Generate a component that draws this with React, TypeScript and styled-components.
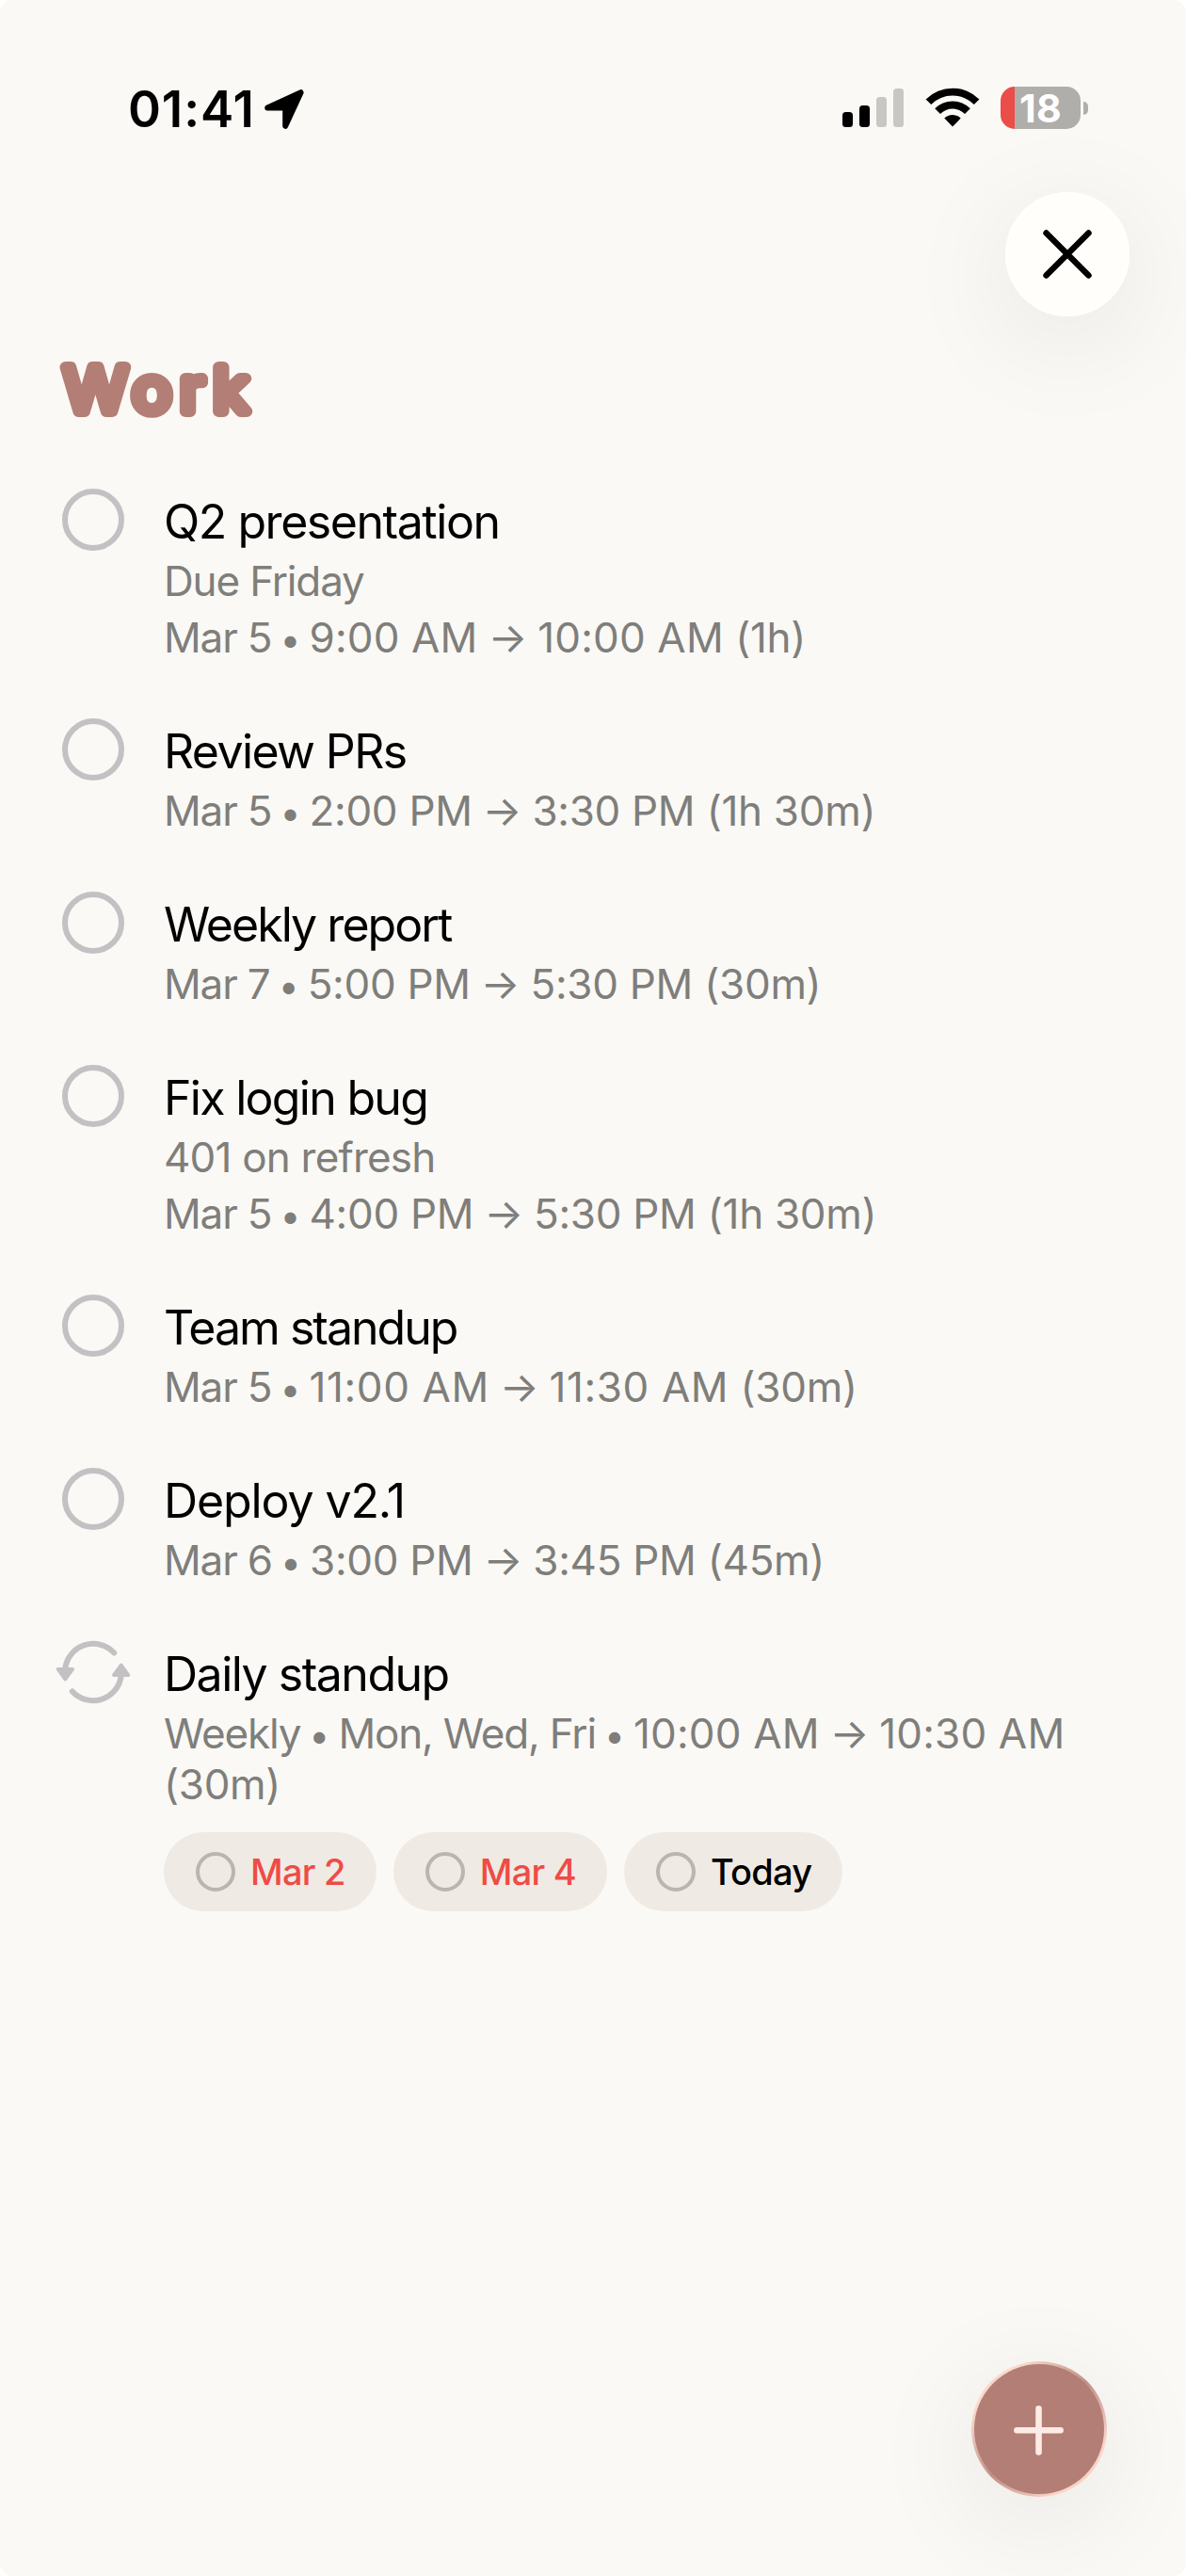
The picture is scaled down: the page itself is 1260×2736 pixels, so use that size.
import React from "react";
import styled, { createGlobalStyle, css } from "styled-components";

const GlobalStyle = createGlobalStyle`
  body {
    margin: 0;
    background: #fff;
  }
  *, *::before, *::after { box-sizing: border-box; }
`;

const Screen = styled.main`
  width: 1260px;
  height: 2736px;
  display: flex;
  flex-direction: column;
  overflow: hidden;
  border-radius: 14px;
  background: #faf9f5;
  color: #000;
  font-family: Inter, "Liberation Sans", sans-serif;
`;

const StatusBar = styled.header`
  height: 204px;
  padding: 92px 104px 0 136px;
  display: flex;
  align-items: flex-start;
  justify-content: space-between;
`;

const StatusGroup = styled.div<{ $gap: number }>`
  display: flex;
  align-items: flex-start;
  height: 45px;
  gap: ${(p) => p.$gap}px;
`;

const Clock = styled.time`
  font-size: 53px;
  line-height: 48px;
  font-weight: 600;
  letter-spacing: 0.9px;
`;

const Arrow = styled.svg`
  margin-top: 3px;
`;

const Signal = styled.div`
  width: 65px;
  height: 43px;
  display: flex;
  align-items: flex-end;
  gap: 7px;
`;

const SignalBar = styled.span<{ $height: number; $active: boolean }>`
  width: 11px;
  height: ${(p) => p.$height}px;
  border-radius: 3.5px;
  background: ${(p) => (p.$active ? "#000" : "#c8c7c4")};
`;

const Battery = styled.div`
  display: flex;
  align-items: center;
  gap: 3px;
`;

const BatteryBody = styled.div`
  width: 85px;
  height: 45px;
  border-radius: 15px;
  display: flex;
  justify-content: center;
  background: linear-gradient(to right, #eb4d49 15px, #afaeab 15px);
  color: #fff;
  font-size: 41px;
  line-height: 46px;
  font-weight: 700;
  letter-spacing: 0.3px;
`;

const BatteryTip = styled.span`
  width: 5px;
  height: 14px;
  border-radius: 0 7px 7px 0;
  background: #afaeab;
`;

const TopActions = styled.div`
  display: flex;
  justify-content: flex-end;
  padding-right: 60px;
`;

const roundButton = css`
  display: flex;
  align-items: center;
  justify-content: center;
  padding: 0;
  border-radius: 50%;
`;

const CloseButton = styled.button`
  ${roundButton}
  width: 132px;
  height: 132px;
  border: 3px solid #fff;
  background: #fffefa;
  box-shadow: 0 24px 120px rgba(0, 0, 0, 0.085);
`;

const Title = styled.h1`
  margin: 0;
  height: 183px;
  padding: 34px 0 0 60px;
`;

const TitleLettering = styled.svg`
  display: block;
  fill: #b37e75;
  stroke: #b37e75;
  stroke-width: 12px;
  stroke-linejoin: round;
  stroke-linecap: round;
  font-size: 64.5px;
  font-weight: 300;
`;

const TaskList = styled.ul`
  margin: 0;
  padding: 0 66px;
  list-style: none;
  display: flex;
  flex-direction: column;
  gap: 59px;
`;

const TaskRow = styled.li`
  display: flex;
  align-items: flex-start;
  gap: 42px;
`;

const Check = styled.span<{ $size: number; $stroke: number; $color: string }>`
  flex: none;
  width: ${(p) => p.$size}px;
  height: ${(p) => p.$size}px;
  border: ${(p) => p.$stroke}px solid ${(p) => p.$color};
  border-radius: 50%;
`;

const RepeatIcon = styled.svg`
  flex: none;
  overflow: visible;
`;

const TaskBody = styled.div`
  padding-top: 5px;
  display: flex;
  flex-direction: column;
  gap: 6px;
`;

const TaskName = styled.div<{ $tracking: number }>`
  margin-bottom: -1px;
  font-size: 50px;
  line-height: 61px;
  letter-spacing: ${(p) => p.$tracking}px;
`;

const TaskDetail = styled.div`
  font-size: 44px;
  line-height: 54px;
  color: #7f7e7b;
`;

const Word = styled.span<{ $tracking: number }>`
  letter-spacing: ${(p) => p.$tracking}px;
  white-space: nowrap;
`;

const Bullet = styled.span`
  margin: 0 -3.3px;
  font-size: 39px;
  line-height: 1;
  vertical-align: 0.5px;
`;

const ArrowGlyph = styled.span`
  margin: 0 -1.5px;
`;

const Chips = styled.div`
  display: flex;
  gap: 18px;
  padding-top: 18px;
`;

const Chip = styled.span<{ $overdue: boolean }>`
  height: 84px;
  padding: 0 33px 0 34px;
  display: flex;
  align-items: center;
  gap: 16px;
  border-radius: 42px;
  background: #f0eae4;
  color: ${(p) => (p.$overdue ? "#ef4b47" : "#000")};
  font-size: 38px;
  line-height: 44px;
  font-weight: 500;
  letter-spacing: -0.75px;
`;

const BottomActions = styled.div`
  margin-top: auto;
  display: flex;
  justify-content: flex-end;
  padding: 0 84px 84px 0;
`;

const AddButton = styled.button`
  ${roundButton}
  width: 144px;
  height: 144px;
  border: 3px solid transparent;
  background:
    linear-gradient(#b37e75, #b37e75) padding-box,
    linear-gradient(135deg, #e9c0b3 0%, #fbdccf 18%, #c08f85 50%, #fbd6ca 80%, #e9c0b3 100%) border-box;
  box-shadow: 0 24px 120px rgba(0, 0, 0, 0.085);
`;

type Task = {
  name: string;
  tracking: number;
  details: string[];
  repeats?: boolean;
  days?: { label: string; overdue: boolean }[];
};

const tasks: Task[] = [
  { name: "Q2 presentation", tracking: -1.45, details: ["Due Friday", "Mar 5 • 9:00 AM → 10:00 AM (1h)"] },
  { name: "Review PRs", tracking: -1.6, details: ["Mar 5 • 2:00 PM → 3:30 PM (1h 30m)"] },
  { name: "Weekly report", tracking: -1.95, details: ["Mar 7 • 5:00 PM → 5:30 PM (30m)"] },
  { name: "Fix login bug", tracking: -1.7, details: ["401 on refresh", "Mar 5 • 4:00 PM → 5:30 PM (1h 30m)"] },
  { name: "Team standup", tracking: -2, details: ["Mar 5 • 11:00 AM → 11:30 AM (30m)"] },
  { name: "Deploy v2.1", tracking: -1.1, details: ["Mar 6 • 3:00 PM → 3:45 PM (45m)"] },
  {
    name: "Daily standup",
    tracking: -1.5,
    details: ["Weekly • Mon, Wed, Fri • 10:00 AM → 10:30 AM (30m)"],
    repeats: true,
    days: [
      { label: "Mar 2", overdue: true },
      { label: "Mar 4", overdue: true },
      { label: "Today", overdue: false },
    ],
  },
];

const signal = [16, 23, 32, 41];

function trackingFor(part: string) {
  if (part.startsWith("11:")) return 0.6;
  if (part.endsWith("AM")) return 0.15;
  if (part.endsWith("PM")) return -0.3;
  if (part.startsWith("(")) return -0.3;
  if (/^\d/.test(part)) return -0.8;
  return -1.15;
}

function Detail({ text }: { text: string }) {
  return (
    <TaskDetail>
      {text.split(/ (?=[•→(])|(?<=[•→]) /).map((part, i) => (
        <React.Fragment key={i}>
          {i > 0 && " "}
          {part === "•" && <Bullet>•</Bullet>}
          {part === "→" && <ArrowGlyph>→</ArrowGlyph>}
          {part !== "•" && part !== "→" && <Word $tracking={trackingFor(part)}>{part}</Word>}
        </React.Fragment>
      ))}
    </TaskDetail>
  );
}

function Repeat() {
  return (
    <RepeatIcon width="66" height="66" viewBox="0 0 66 66" fill="none" stroke="#c3c1c3" strokeLinecap="round" strokeLinejoin="round">
      <path d="M55.2 12.6A30 30 0 0 0 3.3 29" strokeWidth="6" />
      <path d="M10.8 53.4A30 30 0 0 0 62.7 37" strokeWidth="6" />
      <path d="M-4.2 29.9H11L3.3 40.3Z" fill="#c3c1c3" strokeWidth="4" />
      <path d="M70.2 36.1H55L62.7 25.7Z" fill="#c3c1c3" strokeWidth="4" />
    </RepeatIcon>
  );
}

export default function App() {
  return (
    <Screen>
      <GlobalStyle />
      <StatusBar>
        <StatusGroup $gap={10}>
          <Clock>01:41</Clock>
          <Arrow width="42" height="42" viewBox="0 0 42 42">
            <path d="M3.2 19.5 38.6 3.2 22.2 38.8V19.5Z" stroke="#000" strokeWidth="6" strokeLinejoin="round" />
          </Arrow>
        </StatusGroup>
        <StatusGroup $gap={22.5}>
          <Signal>
            {signal.map((h, i) => (
              <SignalBar key={h} $height={h} $active={i < 2} />
            ))}
          </Signal>
          <svg width="58" height="44" viewBox="0 0 58 44">
            <path d="M0.6 13.4A40.2 40.2 0 0 1 57.4 13.4L51.8 19A32.2 32.2 0 0 0 6.2 19Z" />
            <path d="M10.2 23.2A26.6 26.6 0 0 1 47.8 23.2L42 29A18.4 18.4 0 0 0 16 29Z" />
            <path d="M20.3 33.6A12.3 12.3 0 0 1 37.7 33.6L29 42.6Z" />
          </svg>
          <Battery>
            <BatteryBody>18</BatteryBody>
            <BatteryTip />
          </Battery>
        </StatusGroup>
      </StatusBar>
      <TopActions>
        <CloseButton aria-label="Close">
          <svg width="54" height="54" viewBox="0 0 54 54" stroke="#000" strokeWidth="6.4" strokeLinecap="round">
            <path d="M4.5 4.5 49.5 49.5M49.5 4.5 4.5 49.5" />
          </svg>
        </CloseButton>
      </TopActions>
      <Title>
        <TitleLettering width="240" height="90" viewBox="0 0 224 90" preserveAspectRatio="none">
          <text x="7.5 75.3 122.8 155.7" y="67.5">Work</text>
        </TitleLettering>
      </Title>
      <TaskList>
        {tasks.map((task) => (
          <TaskRow key={task.name}>
            {task.repeats ? <Repeat /> : <Check $size={66} $stroke={6} $color="#c3c1c3" />}
            <TaskBody>
              <TaskName $tracking={task.tracking}>{task.name}</TaskName>
              {task.details.map((line) => (
                <Detail key={line} text={line} />
              ))}
              {task.days && (
                <Chips>
                  {task.days.map((day) => (
                    <Chip key={day.label} $overdue={day.overdue}>
                      <Check $size={42} $stroke={4} $color="#b9b5b1" />
                      {day.label}
                    </Chip>
                  ))}
                </Chips>
              )}
            </TaskBody>
          </TaskRow>
        ))}
      </TaskList>
      <BottomActions>
        <AddButton aria-label="Add task">
          <svg width="56" height="56" viewBox="0 0 56 56" stroke="#fdece5" strokeWidth="6.6" strokeLinecap="round">
            <path d="M27.5 6.2V52.4M4.4 29.3H50.6" />
          </svg>
        </AddButton>
      </BottomActions>
    </Screen>
  );
}
